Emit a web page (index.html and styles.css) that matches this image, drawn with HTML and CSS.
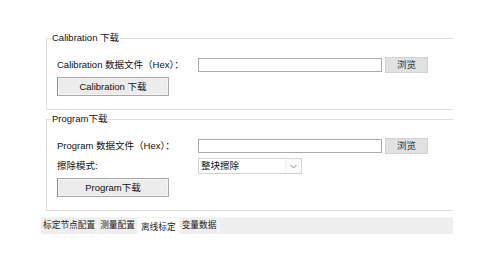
FILE: index.html
```html
<!DOCTYPE html>
<html lang="zh-CN">
<head>
  <meta charset="UTF-8" />
  <title>离线标定</title>
  <link rel="stylesheet" href="styles.css">
</head>
<body>
  <div class="page">
    <div class="group group-cal">
      <div class="group-title">Calibration 下载</div>
      <div class="row">
        <span class="label">Calibration 数据文件（Hex）：</span>
        <span class="textbox"></span>
        <button class="browse" type="button">浏览</button>
      </div>
      <button class="action" type="button">Calibration 下载</button>
    </div>

    <div class="group group-prog">
      <div class="group-title">Program下载</div>
      <div class="row">
        <span class="label">Program 数据文件（Hex）：</span>
        <span class="textbox"></span>
        <button class="browse" type="button">浏览</button>
      </div>
      <div class="row row-erase">
        <span class="label">擦除模式:</span>
        <div class="combo">
          <span class="combo-text">整块擦除</span>
          <span class="combo-arrow">
            <svg width="7" height="5" viewBox="0 0 7 5"><path d="M0.5 1 L3.5 4 L6.5 1" fill="none" stroke="#8a8a8a" stroke-width="1"/></svg>
          </span>
        </div>
      </div>
      <button class="action" type="button">Program下载</button>
    </div>

    <div class="tabs">
      <span class="tab">标定节点配置</span>
      <span class="tab">测量配置</span>
      <span class="tab active">离线标定</span>
      <span class="tab">变量数据</span>
    </div>
  </div>
</body>
</html>
```

FILE: styles.css
```css
body {
  margin: 0;
  background: #fff;
  font-family: "Liberation Sans", "Noto Sans CJK SC", sans-serif;
  font-size: 9.5px;
  line-height: 12px;
  color: #111;
}
.page {
  margin-left: 41px;
  width: 412px;
  padding-top: 38px;
}
.group {
  margin-left: 5px;
  border: 1px solid #dedede;
  border-right: none;
  padding: 0 0 13px 10px;
}
.group-prog {
  margin-top: 9px;
}
.group-title {
  width: max-content;
  margin: -7px 0 0 -6px;
  padding: 0 1px;
  height: 12px;
  background: #fff;
}
.row {
  display: flex;
  align-items: center;
  height: 16px;
  margin-top: 13px;
}
.row-erase {
  margin-top: 4px;
}
.label {
  width: 141px;
  white-space: nowrap;
}
.textbox {
  width: 182px;
  height: 12px;
  border: 1px solid #ababab;
  background: #fff;
}
.browse {
  margin-left: 3px;
  width: 43px;
  height: 16px;
  padding: 0;
  border: 1px solid #d2d2d2;
  background: #e1e1e1;
  font: inherit;
  color: #333;
}
.action {
  display: block;
  margin-top: 4px;
  width: 112px;
  height: 19px;
  padding: 0;
  border: 1px solid #a8a8a8;
  border-left-color: #8f8f8f;
  box-shadow: inset 0 0 0 1px #f4f4f4;
  background: #ececec;
  font: inherit;
  color: #111;
}
.combo {
  display: flex;
  width: 102px;
  height: 14px;
  border: 1px solid #d4d4d4;
  background: #fff;
}
.combo-text {
  flex: 1;
  padding-left: 2px;
  line-height: 14px;
}
.combo-arrow {
  width: 15px;
  display: flex;
  align-items: center;
  justify-content: center;
  border-left: 1px solid #f0f0f0;
  background: #fafafa;
}
.tabs {
  display: flex;
  margin-top: 6px;
  height: 16px;
  background: #eeeeee;
  border-top: 1px solid #f4f4f4;
  font-size: 8.7px;
}
.tab {
  padding: 0 2px;
  line-height: 15px;
  border-right: 1px solid #fafafa;
  color: #222;
}
.tab.active {
  background: #fff;
  line-height: 19px;
  padding: 0 3px;
}
```
